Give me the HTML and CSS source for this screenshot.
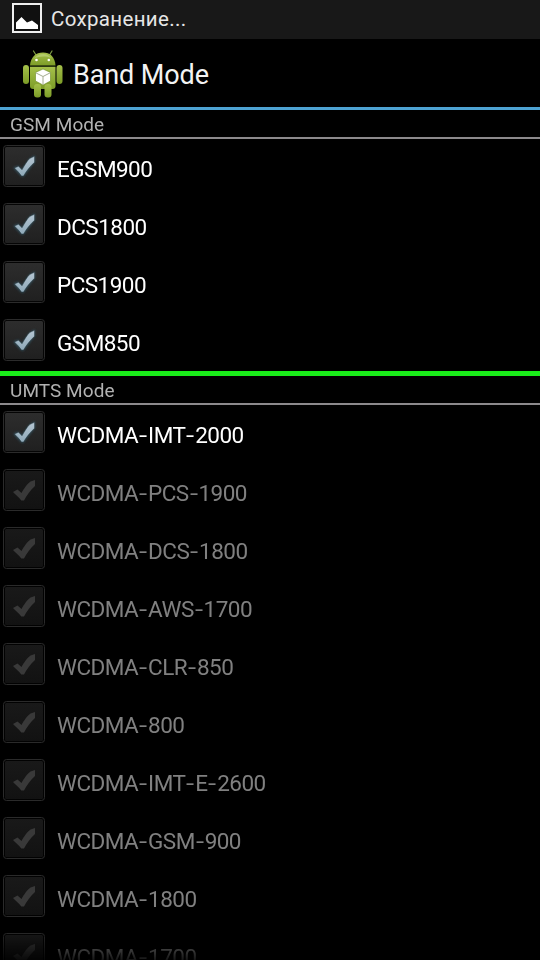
FILE: index.html
```
<!DOCTYPE html>
<html lang="en">
<head>
<meta charset="utf-8">
<title>Band Mode</title>
<link rel="stylesheet" href="styles.css">
</head>
<body>
<svg class="defs" width="0" height="0" aria-hidden="true">
  <defs>
    <linearGradient id="face" x1="0" y1="0" x2="0" y2="1"><stop offset="0" stop-color="#2d2d2d"/><stop offset="1" stop-color="#202020"/></linearGradient>
    <linearGradient id="faceOff" x1="0" y1="0" x2="0" y2="1"><stop offset="0" stop-color="#191919"/><stop offset="1" stop-color="#121212"/></linearGradient>
    <linearGradient id="tick" x1="0" y1="0" x2="0" y2="1"><stop offset="0" stop-color="#b5c6d2"/><stop offset="1" stop-color="#8fa9b9"/></linearGradient>
    <linearGradient id="green" x1="0" y1="0" x2="0" y2="1"><stop offset="0" stop-color="#a5c04a"/><stop offset="1" stop-color="#7c9c27"/></linearGradient>
    <filter id="glow" x="-50%" y="-50%" width="200%" height="200%"><feGaussianBlur stdDeviation="1.3"/></filter>
  </defs>
  <symbol id="on" viewBox="0 0 42 42">
    <rect x=".5" y=".5" width="41" height="41" rx="3" fill="#050505" stroke="#2b2b2b"/>
    <rect x="2" y="2" width="38" height="38" rx="1.5" fill="url(#face)"/>
    <path d="M12 23.200 15 21.900 19 25.900 27.500 14.200 31 12V16.500L20 30.500H18.800Z" fill="#34525f" stroke="#34525f" stroke-width="2" filter="url(#glow)"/>
    <path d="M11.500 23 15.500 21.200 19 24.800C21.500 20.500 24 16 27 13.300L31.500 11.300V17.300C27 21.500 23.500 26 20.500 31H18.500C16.500 28 14 25.500 11.500 23Z" fill="url(#tick)" stroke="#182a33" stroke-width=".4"/>
  </symbol>
  <symbol id="off" viewBox="0 0 42 42">
    <rect x=".5" y=".5" width="41" height="41" rx="3" fill="#020202" stroke="#2a2a2a"/>
    <rect x="2" y="2" width="38" height="38" rx="1.5" fill="url(#faceOff)"/>
    <path d="M10 23 14.500 20.500 18.500 24C21 19.500 24.500 14.500 27.500 12.500L32 11V17C27.500 21 23.500 26.500 21 31.500H18.300C16 28.500 13 26 10 23Z" fill="#393939"/>
  </symbol>
</svg>
<main class="screen">
  <div class="status">
    <svg class="picture" viewBox="0 0 30 30"><rect x="1" y="1" width="28" height="28" fill="#101010" stroke="#eee" stroke-width="2"/><path d="M4 26V19.500L9.500 14 15 19.500 20 17.500 26 22V26Z" fill="#fff"/></svg>
    <span class="status-text">Сохранение...</span>
  </div>
  <header class="title-bar">
    <svg class="robot" viewBox="0 0 42 48">
      <path d="M14 5 11.500 1M27.500 5 30 1" stroke="#7d9b45" stroke-width="1.200" stroke-linecap="round"/>
      <g fill="url(#green)">
        <path d="M8 15.500C8.500 7 14 2.500 21 2.500S33 7 33.500 15.500Z"/>
        <path d="M8 17H33.500V36C33.500 38 32.500 39 30.500 39H11C9 39 8 38 8 36Z"/>
        <rect x="1" y="15" width="6" height="19" rx="3"/><rect x="34.500" y="15" width="6" height="19" rx="3"/>
        <rect x="12" y="34" width="7" height="13.500" rx="3"/><rect x="22.500" y="34" width="7" height="13.500" rx="3"/>
      </g>
      <path d="M8 16.200H33.500" stroke="#3f5218" stroke-width="1"/>
      <path d="M12 9C14 5.500 17 4 21 4S27 5 29 8C24 6 17 6 12 9Z" fill="#c5d985" opacity=".6"/>
      <circle cx="14.500" cy="10" r="1.300" fill="#fff"/><circle cx="26.800" cy="10" r="1.300" fill="#fff"/>
      <path d="M21 19 28.500 22.500V31L21 35 13.500 31V22.500Z" fill="#fff" stroke="#6d8b25" stroke-width=".6"/>
      <path d="M13.800 22.800 21 26.500 28.200 22.800M21 26.500V34.500" fill="none" stroke="#a4ad90" stroke-width="1"/>
    </svg>
    <h1 class="title">Band Mode</h1>
  </header>
  <section class="list">
    <h2 class="section-head">GSM Mode</h2>
    <div class="row"><svg class="box"><use href="#on"/></svg><span class="label">EGSM900</span></div>
    <div class="row"><svg class="box"><use href="#on"/></svg><span class="label">DCS1800</span></div>
    <div class="row"><svg class="box"><use href="#on"/></svg><span class="label">PCS1900</span></div>
    <div class="row"><svg class="box"><use href="#on"/></svg><span class="label">GSM850</span></div>
    <div class="divider"></div>
    <h2 class="section-head">UMTS Mode</h2>
    <div class="row"><svg class="box"><use href="#on"/></svg><span class="label">WCDMA<i>-</i>IMT<i>-</i>2000</span></div>
    <div class="row disabled"><svg class="box"><use href="#off"/></svg><span class="label">WCDMA<i>-</i>PCS<i>-</i>1900</span></div>
    <div class="row disabled"><svg class="box"><use href="#off"/></svg><span class="label">WCDMA<i>-</i>DCS<i>-</i>1800</span></div>
    <div class="row disabled"><svg class="box"><use href="#off"/></svg><span class="label">WCDMA<i>-</i>AWS<i>-</i>1700</span></div>
    <div class="row disabled"><svg class="box"><use href="#off"/></svg><span class="label">WCDMA<i>-</i>CLR<i>-</i>850</span></div>
    <div class="row disabled"><svg class="box"><use href="#off"/></svg><span class="label">WCDMA<i>-</i>800</span></div>
    <div class="row disabled"><svg class="box"><use href="#off"/></svg><span class="label">WCDMA<i>-</i>IMT<i>-</i>E<i>-</i>2600</span></div>
    <div class="row disabled"><svg class="box"><use href="#off"/></svg><span class="label">WCDMA<i>-</i>GSM<i>-</i>900</span></div>
    <div class="row disabled"><svg class="box"><use href="#off"/></svg><span class="label">WCDMA<i>-</i>1800</span></div>
    <div class="row disabled"><svg class="box"><use href="#off"/></svg><span class="label">WCDMA<i>-</i>1700</span></div>
  </section>
</main>
</body>
</html>
```
FILE: styles.css
```
* { box-sizing: border-box; }
body { margin: 0; background: #000; font-family: Roboto, sans-serif; }
.defs { position: absolute; }
.screen { width: 540px; height: 960px; overflow: hidden; display: flex; flex-direction: column; background: #000; }
.status { flex: none; height: 39px; display: flex; align-items: flex-start; padding: 3px 12px; gap: 9px; background: #181818; }
.picture { width: 30px; height: 30px; }
.status-text { color: #e6e6e6; font-size: 20.5px; line-height: 32px; letter-spacing: 0.33px; }
.title-bar { flex: none; height: 71px; display: flex; align-items: flex-start; padding: 11px 22px 0; gap: 9px; border-bottom: 3px solid #4ea3d3; }
.robot { width: 42px; height: 48px; }
.title { margin: 0; color: #f3f3f3; font-size: 27px; font-weight: 400; line-height: 50px; letter-spacing: -0.1px; }
.list { flex: 1; min-height: 0; overflow: hidden; -webkit-mask-image: linear-gradient(#000 820px, transparent 856px); mask-image: linear-gradient(#000 820px, transparent 856px); }
.section-head { margin: 0; height: 29px; padding-left: 10px; border-bottom: 2px solid #8c8a8c; color: #b2b2b2; font-size: 19px; font-weight: 400; line-height: 29px; letter-spacing: 0.06px; }
.row { height: 58px; display: flex; align-items: flex-start; padding: 6px 0 0 3px; gap: 12px; color: #fff; }
.box { flex: none; width: 42px; height: 42px; }
.label { font-size: 22.5px; line-height: 49px; white-space: nowrap; letter-spacing: -0.53px; }
.label i { display: inline-block; font-style: normal; line-height: 1; letter-spacing: 0; margin: 0 1.6px 0 2px; transform: scaleX(1.3); }
.disabled { color: #808080; }
.divider { height: 5px; background: #1aed1a; }
```
